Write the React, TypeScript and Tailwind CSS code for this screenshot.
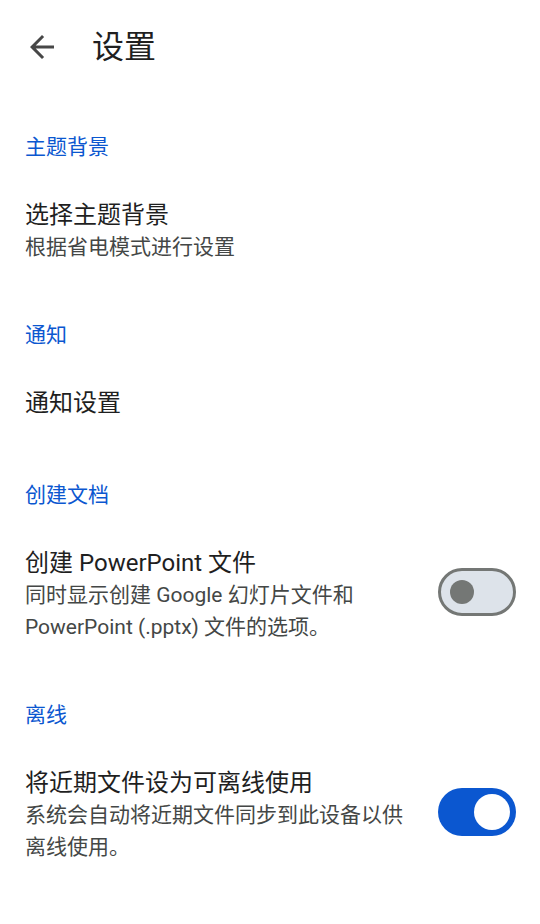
import React from "react";

const font = { fontFamily: 'Roboto, "Noto Sans CJK SC", sans-serif' };

function Toggle({ on }: { on: boolean }) {
  if (on) {
    return (
      <div className="relative h-[48px] w-[78px] shrink-0 rounded-full bg-[#0b57d0]">
        <div className="absolute right-[6px] top-[6px] h-[36px] w-[36px] rounded-full bg-white" />
      </div>
    );
  }
  return (
    <div className="relative h-[48px] w-[78px] shrink-0 rounded-full border-[3px] border-[#747775] bg-[#dde3ea]">
      <div className="absolute left-[9px] top-[9px] h-[24px] w-[24px] rounded-full bg-[#747775]" />
    </div>
  );
}

function SectionHeader({ children }: { children: React.ReactNode }) {
  return (
    <div className="pl-[25px] pt-[39px] text-[21px] leading-[28px] text-[#0b57d0]">{children}</div>
  );
}

function Item({
  title,
  lines,
  toggle,
}: {
  title: string;
  lines?: string[];
  toggle?: boolean;
}) {
  return (
    <div
      className={`flex items-center pl-[25px] pr-[24px] pt-[38px] ${lines ? "pb-[19px]" : "pb-[23px]"}`}
    >
      <div className="flex-1">
        <div className="text-[24px] leading-[32px] text-[#1f1f1f]">{title}</div>
        {lines && lines.map((l, i) => (
          <div key={i} className="text-[21px] leading-[32px] text-[#444746]">
            {l}
          </div>
        ))}
      </div>
      {toggle !== undefined && (
        <div className="-mt-[6px] ml-4">
          <Toggle on={toggle} />
        </div>
      )}
    </div>
  );
}

export default function App() {
  return (
    <div className="min-h-[924px] w-[540px] bg-white" style={font}>
      <div className="flex h-[94px] items-center">
        <div className="ml-[24px] flex h-[36px] w-[36px] items-center justify-center">
          <svg viewBox="0 0 24 24" width="36" height="36" fill="#474747">
            <path d="M20 11H7.83l5.59-5.59L12 4l-8 8 8 8 1.41-1.41L7.83 13H20v-2z" />
          </svg>
        </div>
        <div className="ml-[32px] text-[32px] leading-[40px] text-[#1f1f1f]">设置</div>
      </div>

      <SectionHeader>主题背景</SectionHeader>
      <Item title="选择主题背景" lines={["根据省电模式进行设置"]} />

      <SectionHeader>通知</SectionHeader>
      <Item title="通知设置" />

      <SectionHeader>创建文档</SectionHeader>
      <Item
        title="创建 PowerPoint 文件"
        lines={["同时显示创建 Google 幻灯片文件和", "PowerPoint (.pptx) 文件的选项。"]}
        toggle={false}
      />

      <SectionHeader>离线</SectionHeader>
      <Item
        title="将近期文件设为可离线使用"
        lines={["系统会自动将近期文件同步到此设备以供", "离线使用。"]}
        toggle={true}
      />
    </div>
  );
}
